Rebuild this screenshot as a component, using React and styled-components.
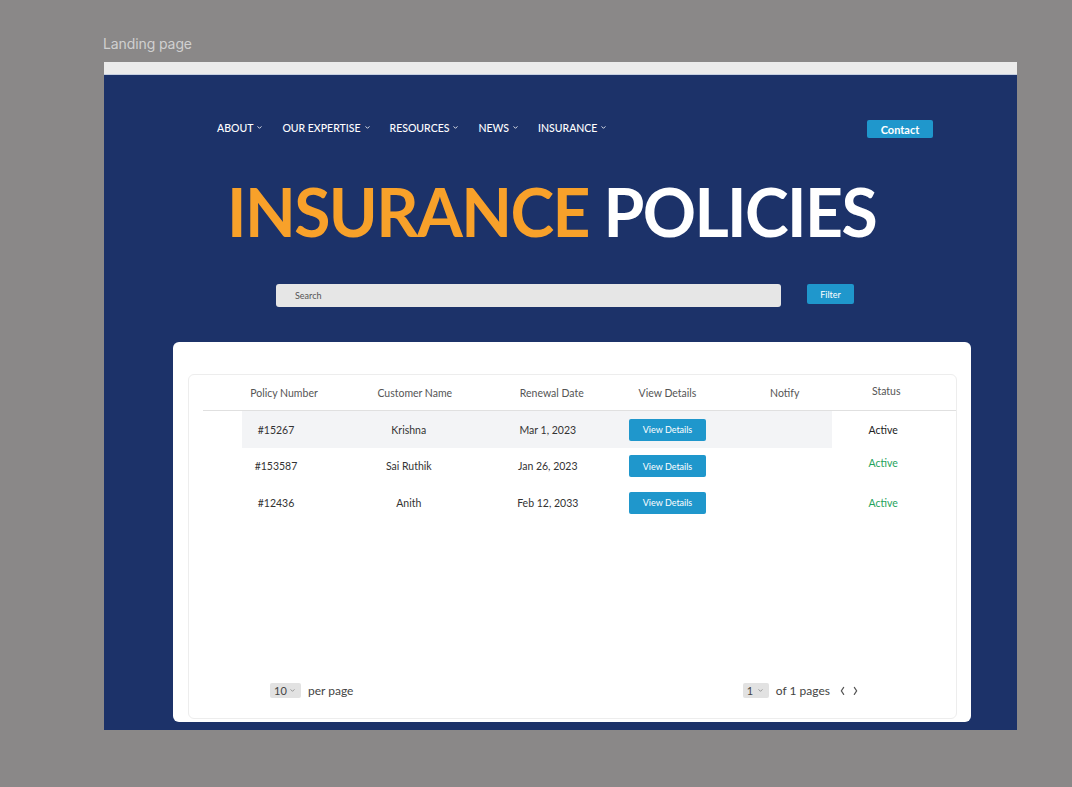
import React from 'react';
import styled, { createGlobalStyle } from 'styled-components';

const GlobalStyle = createGlobalStyle`
    body {
        margin: 0;
        background: #8a8888;
        font-family: Lato, "Noto Sans", sans-serif;
    }
`

const Page = styled.div`
    height: 787px;
    padding: 34px 0 0 103px;
    box-sizing: border-box;
`
const Label = styled.div`
    color: #d0d0d0;
    font-family: Inter, "Noto Sans", sans-serif;
    font-size: 14px;
    line-height: 20px;
    letter-spacing: -0.1px;
`
const Frame = styled.div`
    width: 913px;
    margin: 8px 0 0 1px;
`
const TopStrip = styled.div`
    height: 12px;
    background: #ebebeb;
    border-bottom: 1px solid #c6cfe0;
`
const Hero = styled.div`
    background: #1c3269;
    padding: 45px 0 8px;
`
const Nav = styled.nav`
    display: flex;
    justify-content: space-between;
    align-items: center;
    padding: 0 84px 0 113px;
`
const NavList = styled.ul`
    display: flex;
    gap: 20px;
    list-style: none;
    margin: -3px 0 0;
    padding: 0;
`
const NavItem = styled.li`
    display: flex;
    align-items: center;
    gap: 4px;
    color: #fff;
    font-size: 10.5px;
    font-weight: 500;
`
const Contact = styled.button`
    width: 66px;
    height: 18px;
    border: none;
    border-radius: 2px;
    background: #1f97cc;
    color: #fff;
    font-family: Lato, sans-serif;
    font-size: 11px;
    font-weight: 700;
    padding: 0;
`
const Title = styled.h1`
    margin: 41px 0 0;
    padding-left: 123px;
    font-size: 66px;
    line-height: 66px;
    font-weight: 700;
    letter-spacing: -1.6px;
    color: #fff;
    white-space: nowrap;
`
const Accent = styled.span`
    color: #f8a12a;
`
const SearchRow = styled.div`
    display: flex;
    align-items: flex-start;
    gap: 26px;
    margin-top: 39px;
    padding-left: 172px;
`
const SearchBox = styled.div`
    width: 505px;
    height: 23px;
    box-sizing: border-box;
    border-radius: 3px;
    background: #e6e6e6;
    display: flex;
    align-items: center;
    padding-left: 19px;
    color: #555;
    font-size: 9px;
`
const SmallButton = styled.button`
    width: ${p => p.$w || 47}px;
    height: ${p => p.$h || 20}px;
    border: none;
    border-radius: 2px;
    background: #1f97cc;
    color: #fff;
    font-family: "Liberation Sans Narrow", Lato, sans-serif;
    font-size: 9px;
    padding: 0;
`
const Card = styled.div`
    width: 798px;
    height: 380px;
    margin: 35px 0 0 69px;
    box-sizing: border-box;
    background: #fff;
    border-radius: 6px;
    padding: 32px 15px 3px;
    display: flex;
`
const TableBox = styled.div`
    flex: 1;
    border: 1px solid #ededed;
    border-radius: 6px;
    display: flex;
    flex-direction: column;
`
const Table = styled.div`
    margin-left: 14px;
`
const Row = styled.div`
    display: grid;
    grid-template-columns: 130px 133.5px 126.5px 117px 109.5px 101.5px;
    padding: 0 19px 0 16px;
    height: ${p => p.$h}px;
    align-items: center;
    border-bottom: ${p => p.$head ? '1px solid #e0e0e0' : 'none'};
    background: ${p => p.$hl
        ? 'linear-gradient(to right, transparent 39px, #f3f4f6 39px, #f3f4f6 629px, transparent 629px)'
        : 'none'};
`
const Cell = styled.div`
    justify-self: center;
    font-size: 10.5px;
    color: ${p => p.$color || (p.$head ? '#555' : '#333')};
    white-space: nowrap;
    transform: translate(${p => p.$dx || 0}px, ${p => p.$dy || 0}px);
`
const Footer = styled.div`
    margin-top: auto;
    display: flex;
    justify-content: space-between;
    align-items: center;
    padding: 0 97px 20px 81px;
`
const PageGroup = styled.div`
    display: flex;
    align-items: center;
    gap: 7px;
    color: #444;
    font-size: 12px;
`
const Select = styled.div`
    width: ${p => p.$w}px;
    height: 15px;
    box-sizing: border-box;
    background: #e2e2e2;
    border-radius: 2px;
    display: flex;
    align-items: center;
    justify-content: space-between;
    padding: 0 6px 0 4px;
    font-size: 11px;
    color: #444;
`
const Arrows = styled.div`
    display: flex;
    gap: 6px;
    margin-left: 2px;
`

const Chevron = ({ size = 5, color = '#fff', dir = 'down' }) => {
    const d = {
        down: 'M1 2 L3 4 L5 2',
        left: 'M4 1 L2 4 L4 7',
        right: 'M2 1 L4 4 L2 7',
    }[dir];
    const vb = dir === 'down' ? '0 0 6 6' : '0 0 6 8';
    return (
        <svg width={size} height={dir === 'down' ? size : size * 1.4} viewBox={vb} fill="none">
            <path d={d} stroke={color} strokeWidth="1" strokeLinecap="round" strokeLinejoin="round" />
        </svg>
    );
};

const navItems = ['ABOUT', 'OUR EXPERTISE', 'RESOURCES', 'NEWS', 'INSURANCE'];
const headers = [
    { t: 'Policy Number', dx: 0 },
    { t: 'Customer Name', dx: -1 },
    { t: 'Renewal Date', dx: 6 },
    { t: 'View Details', dx: 0 },
    { t: 'Notify', dx: 4 },
    { t: 'Status', dx: 0, dy: -2 },
];
const policies = [
    { id: '#15267', name: 'Krishna', date: 'Mar 1, 2023', status: '#222', dy: 0, h: 37 },
    { id: '#153587', name: 'Sai Ruthik', date: 'Jan 26, 2023', status: '#1fa35c', dy: -3, h: 36 },
    { id: '#12436', name: 'Anith', date: 'Feb 12, 2033', status: '#1fa35c', dy: 0, h: 37 },
];

export default function App() {
    return (
        <Page>
            <GlobalStyle />
            <Label>Landing page</Label>
            <Frame>
                <TopStrip />
                <Hero>
                    <Nav>
                        <NavList>
                            {navItems.map(n => (
                                <NavItem key={n}>{n}<Chevron /></NavItem>
                            ))}
                        </NavList>
                        <Contact>Contact</Contact>
                    </Nav>
                    <Title><Accent>INSURANCE</Accent> POLICIES</Title>
                    <SearchRow>
                        <SearchBox>Search</SearchBox>
                        <SmallButton>Filter</SmallButton>
                    </SearchRow>
                    <Card>
                        <TableBox>
                            <Table>
                                <Row $head $h={35}>
                                    {headers.map(h => (
                                        <Cell key={h.t} $head $dx={h.dx} $dy={h.dy}>{h.t}</Cell>
                                    ))}
                                </Row>
                                {policies.map((p, i) => (
                                    <Row key={p.id} $h={p.h} $hl={i === 0}>
                                        <Cell $dx={-8}>{p.id}</Cell>
                                        <Cell $dx={-7}>{p.name}</Cell>
                                        <Cell $dx={2}>{p.date}</Cell>
                                        <Cell><SmallButton $w={77} $h={22}>View Details</SmallButton></Cell>
                                        <Cell />
                                        <Cell $color={p.status} $dy={p.dy} $dx={-3}>Active</Cell>
                                    </Row>
                                ))}
                            </Table>
                            <Footer>
                                <PageGroup>
                                    <Select $w={31}>10<Chevron color="#888" /></Select>
                                    per page
                                </PageGroup>
                                <PageGroup>
                                    <Select $w={26}>1<Chevron color="#888" /></Select>
                                    of 1 pages
                                    <Arrows>
                                        <Chevron dir="left" size={7} color="#555" />
                                        <Chevron dir="right" size={7} color="#555" />
                                    </Arrows>
                                </PageGroup>
                            </Footer>
                        </TableBox>
                    </Card>
                </Hero>
            </Frame>
        </Page>
    );
}
